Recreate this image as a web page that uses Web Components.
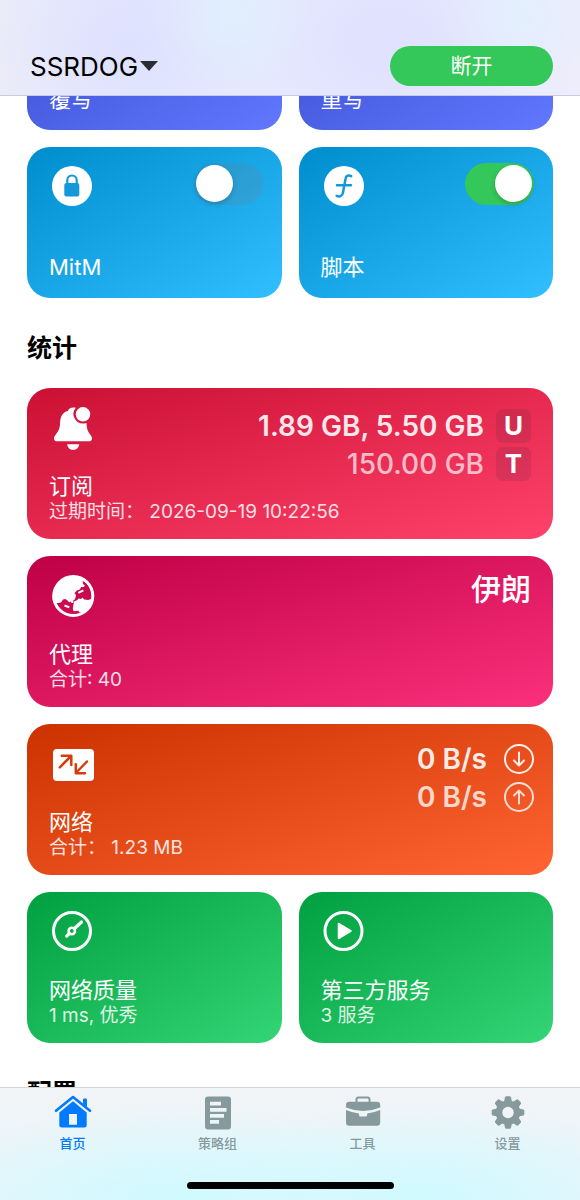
<!DOCTYPE html>
<html lang="zh-CN">
<head>
<meta charset="utf-8">
<meta name="viewport" content="width=device-width, initial-scale=1">
<title>首页</title>
<style>
  html, body { margin: 0; height: 100%; }
  body { font-family: Inter, "Noto Sans CJK SC", sans-serif; color: #000; background: #fff; }
</style>
</head>
<body>
<proxy-app></proxy-app>

<template id="t-app">
  <style>
    :host { display: flex; flex-direction: column; height: 100vh; overflow: hidden; }
    main { flex: 1; min-height: 0; overflow-y: auto; scrollbar-width: none; padding: 17px 27px; background: #fff; }
    .grid { display: grid; grid-template-columns: 1fr 1fr; gap: 17px; }
    .wide { grid-column: 1 / -1; }
    h2 { margin: 0; padding: 30px 0 20px; font-size: 25px; line-height: 40px; font-weight: 700; }
    .end { height: 151px; }
  </style>
  <app-header name="SSRDOG">断开</app-header>
  <main>
    <div class="grid">
      <dash-card tone="indigo" title-text="覆写"></dash-card>
      <dash-card tone="indigo" title-text="重写"></dash-card>
      <dash-card tone="blue" icon="lock" title-text="MitM"><toggle-switch slot="aside" label="MitM"></toggle-switch></dash-card>
      <dash-card tone="blue" icon="script" title-text="脚本"><toggle-switch slot="aside" label="脚本" on></toggle-switch></dash-card>
    </div>
    <h2>统计</h2>
    <div class="grid">
      <dash-card class="wide" tone="red" icon="bell" title-text="订阅" sub="过期时间： 2026-09-19 10:22:56">
        <meter-row slot="aside" badge="U">1.89 GB, 5.50 GB</meter-row>
        <meter-row slot="aside" badge="T" dim>150.00 GB</meter-row>
      </dash-card>
      <dash-card class="wide" tone="pink" icon="globe" title-text="代理" sub="合计: 40">
        <meter-row slot="aside">伊朗</meter-row>
      </dash-card>
      <dash-card class="wide" tone="orange" icon="traffic" title-text="网络" sub="合计： 1.23 MB">
        <meter-row slot="aside" arrow="down">0 B/s</meter-row>
        <meter-row slot="aside" arrow="up" dim>0 B/s</meter-row>
      </dash-card>
      <dash-card tone="green" icon="gauge" title-text="网络质量" sub="1 ms, 优秀"></dash-card>
      <dash-card tone="green" icon="play" title-text="第三方服务" sub="3 服务"></dash-card>
    </div>
    <h2>配置</h2>
    <div class="end"></div>
  </main>
  <tab-bar>
    <tab-item icon="home" active>首页</tab-item>
    <tab-item icon="policy">策略组</tab-item>
    <tab-item icon="tools">工具</tab-item>
    <tab-item icon="gear">设置</tab-item>
  </tab-bar>
</template>

<template id="t-header">
  <style>
    :host {
      display: flex; align-items: flex-end; justify-content: space-between; flex: none;
      box-sizing: border-box; height: 96px; padding: 0 27px 9px 30px; border-bottom: 1px solid #c9cbde;
      background:
        radial-gradient(ellipse 80px 80px at 40% 15%, #e0effdff, #e0effd00),
        radial-gradient(ellipse 80px 60px at 90% 18%, #e3effdff, #e3effd00),
        radial-gradient(ellipse 140px 110px at 22% 45%, #dee1feff, #dee1fe00),
        radial-gradient(ellipse 140px 110px at 67% 45%, #dfe1feff, #dfe1fe00),
        linear-gradient(90deg, #ececf8, #e5e8fe 25%, #e7e9fe 80%, #ededfb);
    }
    button { font: inherit; border: 0; cursor: pointer; }
    .name { display: flex; align-items: center; gap: 2px; height: 40px; padding: 0; background: none; color: #000; font-size: 26px; }
    .name svg { overflow: visible; }
    .action { width: 163px; height: 40px; border-radius: 20px; background: #34c759; color: #fff; font-size: 21px; line-height: 40px; padding: 0; }
  </style>
  <button class="name" type="button"><span></span>
    <svg width="18" height="10" viewBox="0 0 18 10" aria-hidden="true"><path d="M0 0H18L9 10Z" fill="#2b2d33"/></svg>
  </button>
  <button class="action" type="button"><slot></slot></button>
</template>

<template id="t-card">
  <style>
    :host {
      display: grid; grid-template: 1fr auto / auto 1fr; box-sizing: border-box; min-height: 151px; min-width: 0;
      padding: 16px 19px 15px 22px; border-radius: 23px; color: #fff;
      background: linear-gradient(to bottom right, var(--from), var(--to));
    }
    :host([tone=indigo]) { --from: #364acb; --to: #6178ff; }
    :host([tone=blue]) { --from: #008dcd; --to: #32bfff; }
    :host([tone=red]) { --from: #cb1034; --to: #ff426a; }
    :host([tone=pink]) { --from: #bf0045; --to: #fa307b; }
    :host([tone=orange]) { --from: #cb3200; --to: #ff6432; }
    :host([tone=green]) { --from: #009f3f; --to: #34d576; }
    :host(:not([sub])) { padding-bottom: 17px; }
    .icon { grid-area: 1 / 1; width: 46px; height: 46px; }
    .icon svg { display: block; overflow: visible; }
    .aside { grid-area: 1 / 2 / 3 / 3; display: flex; flex-direction: column; align-items: flex-end; }
    .text { grid-area: 2 / 1 / 3 / 3; }
    .title { margin: 0; font-size: 22px; line-height: 28px; font-weight: 400; }
    .sub { margin: 0; font-size: 19px; line-height: 24px; font-weight: 400; opacity: .85; white-space: nowrap; }
  </style>
  <div class="icon"></div>
  <div class="aside"><slot name="aside"></slot></div>
  <div class="text"><h3 class="title"></h3></div>
</template>

<template id="t-switch">
  <style>
    :host { display: block; }
    input {
      appearance: none; display: block; margin: 0; box-sizing: border-box; width: 69px; height: 42px; padding: 2px;
      border-radius: 21px; background: #7878802e; cursor: pointer;
    }
    input::before { content: ""; display: block; width: 37px; height: 37px; border-radius: 50%; background: #fff; box-shadow: 0 2px 5px #0003; }
    input:checked { background: #34c759; }
    input:checked::before { margin-left: auto; }
  </style>
  <input type="checkbox" role="switch">
</template>

<template id="t-meter">
  <style>
    :host { display: flex; align-items: center; gap: 12px; height: 38px; margin-right: 3px; font-size: 28px; font-weight: 600; white-space: nowrap; }
    :host([badge]:first-of-type) { margin-top: 3px; }
    :host([arrow]) { margin-right: 0; gap: 17px; }
    .value { opacity: .89; }
    :host([dim]) .value { opacity: .68; font-weight: 500; }
    :host([arrow][dim]) .value { opacity: .77; font-weight: 600; }
    :host(:not([badge]):not([arrow])) .value { font-size: 30px; font-weight: 500; opacity: 1; line-height: 34px; }
    :host(:not([badge]):not([arrow])) { height: 34px; }
    .badge { width: 35px; height: 34px; line-height: 34px; border-radius: 7px; background: #60284229; text-align: center; font-size: 26px; font-weight: 700; }
    svg { display: block; opacity: .9; }
    :host([dim]) svg { opacity: .8; }
  </style>
  <span class="value"><slot></slot></span>
</template>

<template id="t-tabs">
  <style>
    :host {
      display: flex; flex-direction: column; flex: none; box-sizing: border-box; height: 113px;
      border-top: 1px solid #d3d6d9;
      background:
        radial-gradient(ellipse 42% 95px at 30% 100%, #cffaffff, #d3faff00),
        radial-gradient(ellipse 42% 95px at 73% 100%, #cffaffff, #d3faff00),
        linear-gradient(#f2f4f6, #e6f5fb);
    }
    nav { display: grid; grid-template-columns: repeat(4, 1fr); flex: 1; }
    .home { width: 207px; height: 7px; border-radius: 4px; background: #000; margin: 0 auto 11px; }
  </style>
  <nav><slot></slot></nav>
  <div class="home"></div>
</template>

<template id="t-tab">
  <style>
    :host { display: block; color: #86999d; }
    :host([active]) { color: #007aff; }
    a { display: flex; flex-direction: column; align-items: center; gap: 4px; padding-top: 6px; color: inherit; text-decoration: none; font-size: 13px; line-height: 18px; font-weight: 500; }
    svg { display: block; }
  </style>
  <a href="#"><svg width="40" height="36" viewBox="0 0 40 36" fill="currentColor" aria-hidden="true"></svg><span><slot></slot></span></a>
</template>

<script>
  const disc = '<circle cx="23" cy="23" r="20" fill="#fff"/>';
  const CARD_ICONS = {
    lock: disc + '<rect x="15.300" y="20" width="15" height="13.500" rx="2" fill="#1498d9"/><path d="M18.300 21v-3.800a4.700 4.700 0 0 1 9.400 0V21" fill="none" stroke="#1498d9" stroke-width="2.200"/>',
    script: disc + '<path d="M30.200 13.200C27.500 11.600 25 12.500 24.500 16L22 29.500C21.300 33 19 34.200 15.600 32.900M16 22.200H30" fill="none" stroke="#1498d9" stroke-width="2.500" stroke-linecap="round"/>',
    bell: '<path fill="#fff" d="M26.800 3.800a9.500 9.500 0 0 0 8.600 15.600l2.100-.4c.3 5.800 1 8.300 4.400 12.400 2.200 2.900 1 5.900-1.900 5.900H8c-3 0-4-3.100-1.900-5.900 3.700-4.500 4.800-6.700 5-12.900.2-6.600 3-10.500 7.800-11.600.9-2.500 3.500-4 7.900-3.100z"/><circle cx="34" cy="10.300" r="7.200" fill="#fff"/><path fill="#fff" d="M18.200 40.300h12c-.4 3.400-2.700 5.700-6 5.700s-5.600-2.300-6-5.700z"/>',
    globe: '<circle cx="24.300" cy="24" r="19.500" fill="none" stroke="#fff" stroke-width="3"/><path fill="#fff" d="M36.500 8.500l-2.800 1 .3 2.300 1.800 1.600-.8 1.700-2.800-.2-1.400 2.600-3 1-2.300 2.800 1.500 1.700-.6 3.200-2.400 1.400-.3 3-2.400-1.200-1 1.200-1.800-2.200-2.200-1.400-2.300.5-1.800 2.800-2.300.8L4.500 31A20.500 20.500 0 0 1 36.500 8.500z"/><path fill="#fff" d="M25 29.500l3.300-1.400 1.200-1.500 2.600.3 1.400-1.300 1.600 2 4 .3 2.900-.8c.3 5.600-3.200 10.900-7.600 13.400l-4-.1-1-1.700-4.800.5-.8-2.400z"/><path d="M29.300 20.800l5-2.500M15.500 33.500l4.800 1.800M23.300 31v-3l2.300-1.500" fill="none" stroke="#fff" stroke-width="2"/>',
    traffic: '<rect x="4" y="9" width="41" height="32" rx="4" fill="#fff"/><path d="M10.800 27.300 22 16M12.800 15.800H22.300V25M38 21.500 26.800 33M26.800 24.300V33.300H36" fill="none" stroke="#d63c0a" stroke-width="2.500" stroke-linecap="round" stroke-linejoin="round"/>',
    gauge: '<circle cx="23" cy="23" r="18.500" fill="none" stroke="#fff" stroke-width="3"/><circle cx="22.800" cy="23" r="3.200" fill="none" stroke="#fff" stroke-width="2.600"/><path d="M25.500 20.500 32.500 14M20.300 25.500l-2.600 2.600" stroke="#fff" stroke-width="3.200" stroke-linecap="round"/>',
    play: '<circle cx="22.500" cy="23" r="18.500" fill="none" stroke="#fff" stroke-width="3"/><path d="M17.500 15.500v15L30 23z" fill="#fff" stroke="#fff" stroke-width="1.500" stroke-linejoin="round"/>'
  };
  const tooth = [0, 45, 90, 135, 180, 225, 270, 315]
    .map(a => `<path d="M15.800 9 17 3.200q.3-1 1.300-1h3.400q1 0 1.300 1L24.200 9z" transform="rotate(${a} 20 18.500)"/>`).join('');
  const TAB_ICONS = {
    home: '<path d="M3 16.800 20 3 37 16.800" fill="none" stroke="currentColor" stroke-width="2.600" stroke-linecap="round" stroke-linejoin="round"/><path d="M30 5.500q0-1 1-1h2q1 0 1 1V13l-4-3.300z"/><path fill-rule="evenodd" d="M20 7.200 33.700 18.400V31q0 2.500-2.500 2.500H8.800Q6.300 33.500 6.300 31V18.400zM16 20v10.800h8V20z"/>',
    policy: '<path fill-rule="evenodd" d="M10 2.500H30q3 0 3 3V32.500q0 3-3 3H10q-3 0-3-3V5.500q0-3 3-3zM12 7.800v3.800H23V7.800zM12 14v3.800H28.500V14zM12 20v3.800H26V20zM12 26v3.800H21V26z"/>',
    tools: '<path d="M13.500 9V5.500q0-2 2-2h9q2 0 2 2V9" fill="none" stroke="currentColor" stroke-width="2"/><path d="M3 13.500V11q0-3.200 3.200-3.200H34q3.200 0 3.200 3.200v2.500Q20 20.500 3 13.500z"/><path d="M3 16q6 2.600 13 3.400v1.600q0 1.500 1.500 1.500h5.200q1.500 0 1.500-1.500v-1.600Q31.500 18.600 37.200 16v12.500q0 3.200-3.200 3.200H6.200Q3 31.700 3 28.500z"/>',
    gear: tooth + '<circle cx="20" cy="18.500" r="9" fill="none" stroke="currentColor" stroke-width="6.500"/>'
  };
  const ARROWS = {
    down: 'M15 8.500V21M10 16.500l5 5 5-5',
    up: 'M15 21.500V9M10 13.500l5-5 5 5'
  };

  class Base extends HTMLElement {
    connectedCallback() {
      if (this.shadowRoot) return;
      const root = this.attachShadow({ mode: 'open' });
      root.append(document.getElementById(this.constructor.template).content.cloneNode(true));
      this.fill(root);
    }
    fill() {}
  }

  customElements.define('app-header', class extends Base {
    static template = 't-header';
    fill(root) { root.querySelector('.name span').textContent = this.getAttribute('name'); }
  });

  customElements.define('dash-card', class extends Base {
    static template = 't-card';
    fill(root) {
      root.querySelector('.title').textContent = this.getAttribute('title-text');
      const icon = CARD_ICONS[this.getAttribute('icon')];
      if (icon) root.querySelector('.icon').innerHTML = `<svg width="46" height="46" viewBox="0 0 46 46" aria-hidden="true">${icon}</svg>`;
      if (this.hasAttribute('sub')) {
        const p = document.createElement('p');
        p.className = 'sub';
        p.textContent = this.getAttribute('sub');
        root.querySelector('.text').append(p);
      }
    }
  });

  customElements.define('toggle-switch', class extends Base {
    static template = 't-switch';
    fill(root) {
      const input = root.querySelector('input');
      input.checked = this.hasAttribute('on');
      input.setAttribute('aria-label', this.getAttribute('label'));
    }
  });

  customElements.define('meter-row', class extends Base {
    static template = 't-meter';
    fill(root) {
      if (this.hasAttribute('badge')) {
        const b = document.createElement('span');
        b.className = 'badge';
        b.textContent = this.getAttribute('badge');
        root.append(b);
      }
      const arrow = ARROWS[this.getAttribute('arrow')];
      if (arrow) root.querySelector('.value').insertAdjacentHTML('afterend',
        `<svg width="30" height="30" viewBox="0 0 30 30" fill="none" stroke="#fff" stroke-width="2" stroke-linecap="round" stroke-linejoin="round" aria-hidden="true"><circle cx="15" cy="15" r="14"/><path d="${arrow}"/></svg>`);
    }
  });

  customElements.define('tab-item', class extends Base {
    static template = 't-tab';
    fill(root) {
      root.querySelector('svg').innerHTML = TAB_ICONS[this.getAttribute('icon')];
      if (this.hasAttribute('active')) root.querySelector('a').setAttribute('aria-current', 'page');
    }
  });

  customElements.define('tab-bar', class extends Base { static template = 't-tabs'; });

  customElements.define('proxy-app', class extends Base {
    static template = 't-app';
    // Open on the statistics section, with the first row of cards partly scrolled away.
    fill(root) { root.querySelector('main').scrollTop = 134; }
  });
</script>
</body>
</html>
